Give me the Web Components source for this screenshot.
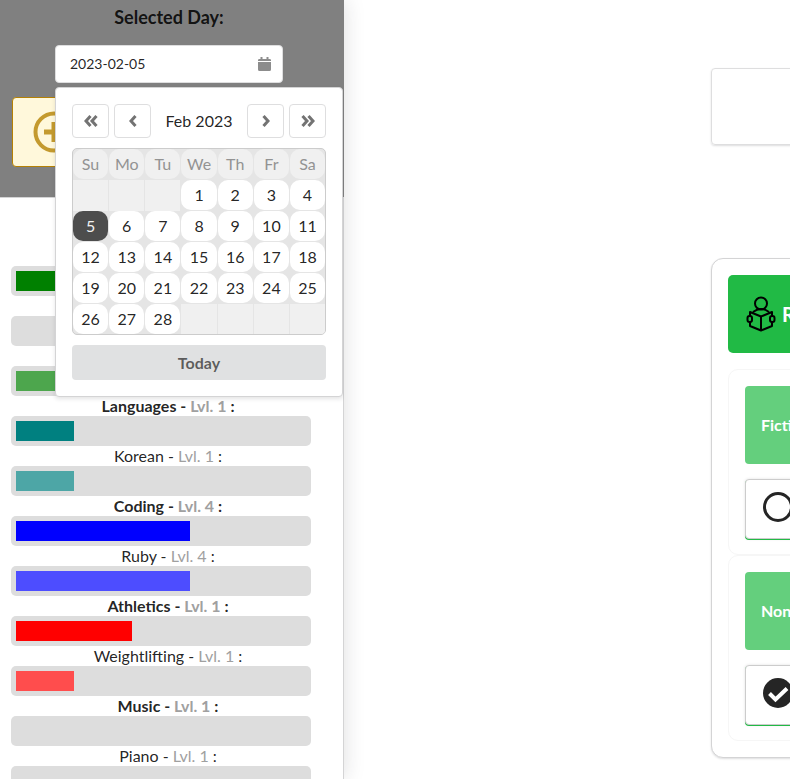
<!DOCTYPE html>
<html lang="en">
<head>
<meta charset="utf-8">
<title>Skill tracker</title>
<style>
body { margin: 0; background: #fff; color: rgba(0,0,0,.87); font: 16px/20px Lato, "Liberation Sans", sans-serif; }
</style>
</head>
<body>
<tracker-app></tracker-app>
<script>
function define(name, html, setup) {
  const template = document.createElement('template');
  template.innerHTML = html;
  customElements.define(name, class extends HTMLElement {
    constructor() {
      super();
      this.attachShadow({ mode: 'open' }).append(template.content.cloneNode(true));
    }
    connectedCallback() { if (setup) setup(this, this.shadowRoot); }
  });
}

define('skill-bar', `
<style>
:host { display: block; text-align: center; }
.label { height: 20px; }
:host([main]) .label { font-weight: 700; }
.lvl { color: #a0a0a0; }
.track { box-sizing: border-box; height: 30px; max-width: 300px; padding: 5px; border-radius: 5px; background: #ddd; }
.fill { height: 20px; width: var(--amount, 0%); background: var(--tone, transparent); }
</style>
<div class="label"></div>
<div class="track" role="progressbar"><div class="fill"></div></div>`,
(host, root) => {
  const name = host.getAttribute('name');
  const label = root.querySelector('.label');
  if (name) {
    const lvl = document.createElement('span');
    lvl.className = 'lvl';
    lvl.textContent = ' Lvl. ' + host.getAttribute('level') + ' ';
    label.replaceChildren(name + ' -', lvl, ':');
  }
  const bar = root.querySelector('.track');
  bar.setAttribute('aria-label', name || 'Skill');
  bar.setAttribute('aria-valuenow', host.getAttribute('value'));
  host.style.setProperty('--amount', host.getAttribute('value') + '%');
  if (host.hasAttribute('tone')) host.style.setProperty('--tone', host.getAttribute('tone'));
});

define('month-calendar', `
<style>
:host { display: block; box-sizing: border-box; width: 288px; padding: 16px; border: 1px solid #d4d4d5; border-radius: 4px; background: #fff; box-shadow: 0 2px 4px 0 rgba(34,36,38,.12); }
button { font: inherit; color: inherit; padding: 0; cursor: pointer; }
nav { display: flex; align-items: center; gap: 5px; margin-bottom: 10px; }
nav button { flex: none; width: 37px; height: 34px; border: 1px solid #dededf; border-radius: 4px; background: #fff; display: grid; place-items: center; }
nav svg { fill: none; stroke: #737373; stroke-width: 3; }
nav span { flex: 1; text-align: center; }
table { width: 100%; table-layout: fixed; border-collapse: separate; border-spacing: 0; border: 1px solid #ccc; border-radius: 5px; background: #e5e5e5; overflow: hidden; margin-bottom: 10px; }
th, td { padding: 0 1px 1px 0; height: 30px; font-weight: 400; text-align: center; }
th:last-child { width: 35px; }
th:last-child, td:last-child { padding-right: 0; }
tr:last-child td { padding-bottom: 0; }
th span { display: block; line-height: 30px; border-radius: 10px; background: #f0f0f0; color: #939393; }
td button { display: block; width: 100%; height: 30px; border: 0; border-radius: 10px; background: #fff; }
td button[aria-current] { background: #4d4d4d; color: #f2f2f2; }
td i { display: block; height: 31px; background: #f0f0f0; }
tbody tr:first-child td { padding-bottom: 0; }
tbody tr:first-child td button { margin-bottom: 1px; }
tr:last-child td i { height: 30px; }
.today { display: block; width: 100%; height: 35px; border: 0; border-radius: 4px; background: #e0e1e2; color: rgba(0,0,0,.6); font-weight: 700; }
</style>
<nav>
<button aria-label="Previous year"><svg width="14" height="12"><path d="M6.5 1 2 6l4.500 5M12.500 1 8 6l4.500 5"/></svg></button>
<button aria-label="Previous month"><svg width="8" height="12"><path d="M6.500 1 2 6l4.500 5"/></svg></button>
<span>Feb 2023</span>
<button aria-label="Next month"><svg width="8" height="12"><path d="m1.500 1L6 6l-4.500 5"/></svg></button>
<button aria-label="Next year"><svg width="14" height="12"><path d="m1.500 1L6 6l-4.500 5M7.500 1 12 6l-4.500 5"/></svg></button>
</nav>
<table><thead><tr></tr></thead><tbody></tbody></table>
<button class="today">Today</button>`,
(host, root) => {
  root.querySelector('thead tr').innerHTML =
    ['Su', 'Mo', 'Tu', 'We', 'Th', 'Fr', 'Sa'].map(d => `<th scope="col"><span>${d}</span></th>`).join('');
  let rows = '';
  for (let w = 0; w < 5; w++) {
    rows += '<tr>';
    for (let d = 0; d < 7; d++) {
      const n = w * 7 + d - 2;
      rows += n < 1 || n > 28 ? '<td><i></i></td>'
        : `<td><button${n === 5 ? ' aria-current="date"' : ''}>${n}</button></td>`;
    }
    rows += '</tr>';
  }
  root.querySelector('tbody').innerHTML = rows;
});

define('day-picker', `
<style>
:host { display: block; position: relative; width: 228px; }
.field { display: flex; align-items: center; box-sizing: border-box; height: 38px; padding: 0 11px 0 14px; border: 1px solid #dededf; border-radius: 4px; background: #fff; }
input { flex: 1; min-width: 0; padding: 0; border: 0; outline: 0; background: none; color: rgba(0,0,0,.87); font: inherit; font-size: 14px; }
svg { fill: #8c8c8c; }
month-calendar { position: absolute; top: 42px; left: 0; z-index: 2; }
</style>
<div class="field">
<input type="text" value="2023-02-05" aria-label="Selected Day">
<svg width="13" height="15"><path d="M0 5h13v7.500q0 1.500-1.500 1.500h-10Q0 14 0 12.500zM0 4V3q0-1 1.500-1H2.500V0h2v2h4V0h2v2h1Q13 2 13 3v1z"/></svg>
</div>
<month-calendar></month-calendar>`);

define('side-panel', `
<style>
:host { display: flex; flex-direction: column; box-sizing: border-box; width: 344px; height: 100vh; overflow: hidden; background: #fff; box-shadow: 0 0 20px rgba(34,36,38,.15); }
header { display: flex; flex-direction: column; align-items: center; padding: 5px 18px 30px 12px; background: #808080; }
h1 { margin: 0 0 16px; font-size: 18px; line-height: 24px; font-weight: 700; }
.add { align-self: stretch; height: 70px; margin-top: 14px; padding: 0 20px; border: 1px solid #b58105; border-radius: 4px; background: #fff8db; display: flex; align-items: center; }
.add svg { fill: none; stroke: #c49a2e; stroke-width: 4; }
.skills { flex: 1; padding: 48px 18px 0 11px; border-top: 1px solid #d4d4d5; border-right: 1px solid #d4d4d5; }
</style>
<header>
<h1>Selected Day:</h1>
<day-picker></day-picker>
<button class="add" aria-label="Add activity"><svg width="42" height="42"><circle cx="21" cy="21" r="18.500"/><path stroke-width="5" d="M11 21h20M21 11v20"/></svg></button>
</header>
<div class="skills"><slot></slot></div>`);

define('check-card', `
<style>
:host { display: block; padding: 16px 16px 14px; border: 1px solid #f6f6f6; border-radius: 10px; }
.title { display: flex; align-items: center; height: 78px; padding: 0 16px; border-radius: 4px; background: #64cf7d; color: #fff; font-weight: 700; }
button { box-sizing: border-box; display: flex; width: 100%; height: 60px; margin: 15px 0 1px; padding: 12px 17px; border: 1px solid #ccc; border-radius: 4px; background: #fff; box-shadow: 0 1px 0 #21ba45, 0 0 3px rgba(0,0,0,.12); }
.ring { fill: none; stroke: #252525; stroke-width: 3; }
.disc { fill: #252525; }
.tick { fill: none; stroke: #fff; stroke-width: 4; }
:host(:not([done])) .on, :host([done]) .off { display: none; }
</style>
<div class="title"><slot></slot></div>
<button aria-label="Toggle done">
<svg class="off" width="30" height="30"><circle class="ring" cx="15" cy="15" r="13.500"/></svg>
<svg class="on" width="30" height="30"><circle class="disc" cx="15" cy="15" r="15"/><path class="tick" d="m6.500 15.500 6 6L24 10.500"/></svg>
</button>`);

define('activity-group', `
<style>
:host { display: block; padding: 16px; border: 1px solid #d4d4d5; border-radius: 12px; background: #fff; box-shadow: 0 1px 2px rgba(34,36,38,.15); }
h2 { display: flex; align-items: center; gap: 6px; height: 78px; margin: 0 0 16px; padding: 0 18px; border-radius: 5px; background: #21ba45; color: #fff; font-size: 20px; line-height: 24px; }
svg { fill: none; stroke: #000; stroke-width: 2; stroke-linejoin: round; }
</style>
<h2><svg width="30" height="36"><circle cx="15" cy="7.500" r="6"/><path d="M7 16q8-6 16 0M4 16l11 4.500L26 16v14l-11 4.500L4 30zM15 20.500v14"/><rect x="1.500" y="20" width="4.500" height="6" rx="2" fill="#21ba45"/><rect x="24" y="20" width="4.500" height="6" rx="2" fill="#21ba45"/></svg>Reading</h2>
<slot></slot>`);

define('tracker-app', `
<style>
:host { display: grid; grid-template-columns: auto 1fr; height: 100vh; overflow: hidden; }
side-panel { position: relative; z-index: 1; }
main { min-width: 0; overflow: hidden; display: flex; flex-direction: column; gap: 113px; padding: 68px 0 20px 367px; }
.panel, activity-group { min-width: 360px; box-sizing: border-box; }
.panel { height: 77px; border: 1px solid #dededf; border-radius: 4px; box-shadow: 0 1px 2px rgba(34,36,38,.15); }
</style>
<side-panel>
<skill-bar main value="40" tone="#008000"></skill-bar>
<skill-bar value="0"></skill-bar>
<skill-bar value="40" tone="#4da64d"></skill-bar>
<skill-bar main name="Languages" level="1" value="20" tone="#008080"></skill-bar>
<skill-bar name="Korean" level="1" value="20" tone="#4da6a6"></skill-bar>
<skill-bar main name="Coding" level="4" value="60" tone="#0000ff"></skill-bar>
<skill-bar name="Ruby" level="4" value="60" tone="#4d4dff"></skill-bar>
<skill-bar main name="Athletics" level="1" value="40" tone="#ff0000"></skill-bar>
<skill-bar name="Weightlifting" level="1" value="20" tone="#ff4d4d"></skill-bar>
<skill-bar main name="Music" level="1" value="0"></skill-bar>
<skill-bar name="Piano" level="1" value="0"></skill-bar>
</side-panel>
<main>
<section class="panel"></section>
<activity-group>
<check-card>Fiction</check-card>
<check-card done>Nonfiction</check-card>
</activity-group>
</main>`);
</script>
</body>
</html>
